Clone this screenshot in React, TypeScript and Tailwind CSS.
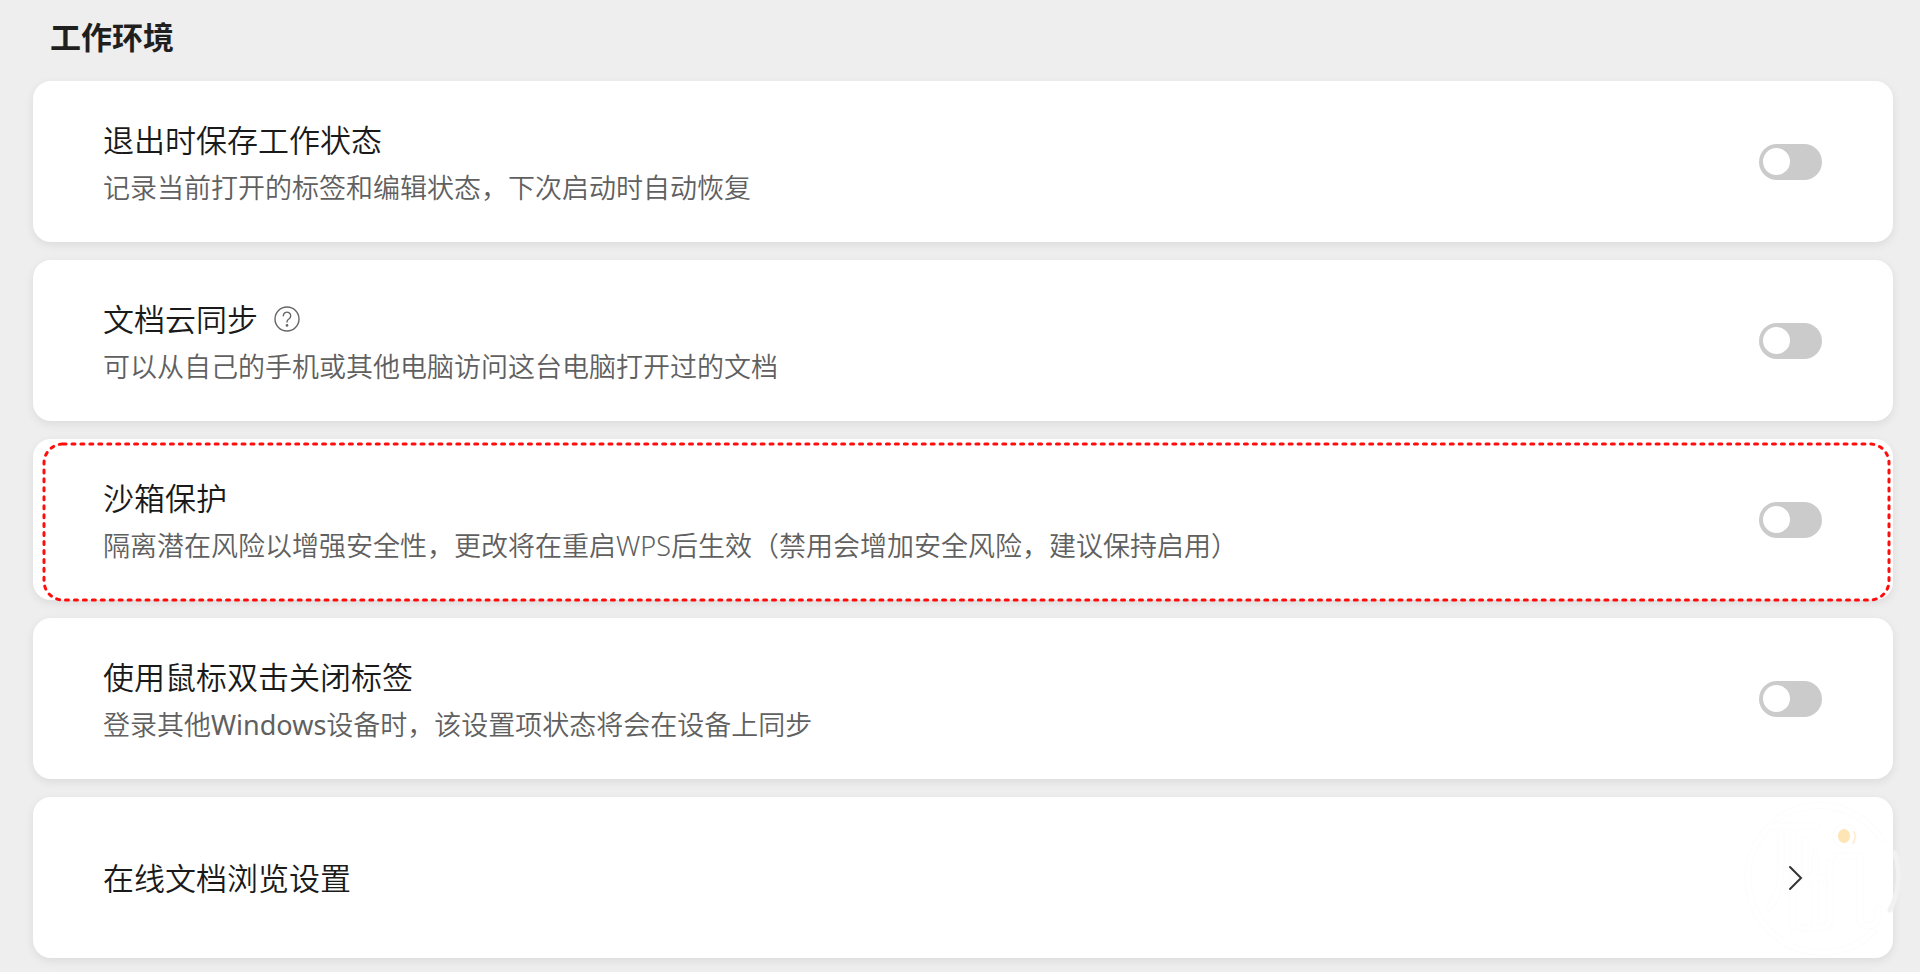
import React, { useId, useState } from 'react';

interface SettingItem {
  title: string;
  description: React.ReactNode;
  hasHelp?: boolean;
  highlighted?: boolean;
}

const settings: SettingItem[] = [
  {
    title: '退出时保存工作状态',
    description: '记录当前打开的标签和编辑状态，下次启动时自动恢复',
  },
  {
    title: '文档云同步',
    description: '可以从自己的手机或其他电脑访问这台电脑打开过的文档',
    hasHelp: true,
  },
  {
    title: '沙箱保护',
    description: '隔离潜在风险以增强安全性，更改将在重启WPS后生效（禁用会增加安全风险，建议保持启用）',
    highlighted: true,
  },
  {
    title: '使用鼠标双击关闭标签',
    description: (
      <>
        登录其他<span className="font-normal">Windows</span>设备时，该设置项状态将会在设备上同步
      </>
    ),
  },
];

const cardClass =
  'relative flex w-full min-h-[161px] items-center justify-between rounded-[18px] bg-white pl-[70px] pr-[71px] text-left shadow-[0_3px_10px_rgba(0,0,0,0.08)]';

const HelpIcon: React.FC = () => (
  <svg width="26" height="26" viewBox="0 0 26 26" fill="none" stroke="#666666" strokeWidth="1.4" strokeLinecap="round">
    <circle cx="13" cy="13" r="12" />
    <path d="M9.3 9.8a3.7 3.7 0 1 1 5.6 3.2c-1.3.8-1.9 1.5-1.9 2.9" />
    <circle cx="13" cy="19.4" r="1.3" fill="#666666" stroke="none" />
  </svg>
);

const DashedOutline: React.FC = () => (
  <svg className="pointer-events-none absolute left-[11px] top-[5px] h-[calc(100%-5px)] w-[calc(100%-15px)] overflow-visible">
    <rect width="100%" height="100%" rx="19" fill="none" stroke="#ff0d0d" strokeWidth="3" strokeDasharray="3 5.95" strokeLinecap="round" />
  </svg>
);

const Watermark: React.FC = () => (
  <svg
    className="pointer-events-none absolute right-[-8px] top-[1px] overflow-visible"
    width="156"
    height="156"
    viewBox="0 0 156 156"
    fill="none"
    strokeLinecap="round"
    strokeLinejoin="round"
  >
    {/* wide pale stroke under a white one leaves a hairline outline */}
    <g stroke="#fcfcfc" strokeWidth="7">
      <path d="M32 21A74 74 0 0 1 137 42M128 134A74 74 0 0 1 21 32" />
      <path d="M24 28h48M36 36v34q0 24-11 39M48 28v102M60 42v38h18M70 57v73H58M85 64v54q0 12-11 12M92 58h23v60q0 10 8 10q10 0 10-10v-8" />
      <circle cx="100" cy="38" r="9" />
    </g>
    <g stroke="#ffffff" strokeWidth="5">
      <path d="M32 21A74 74 0 0 1 137 42M128 134A74 74 0 0 1 21 32" />
      <path d="M24 28h48M36 36v34q0 24-11 39M48 28v102M60 42v38h18M70 57v73H58M85 64v54q0 12-11 12M92 58h23v60q0 10 8 10q10 0 10-10v-8" />
      <circle cx="100" cy="38" r="9" />
    </g>
    <path d="M150 55A74 74 0 0 1 145 112" stroke="#f1f1f1" strokeWidth="5" />
    <path d="M109 34q3 5-1 11" stroke="#feefd0" strokeWidth="2" />
    <ellipse cx="99" cy="38" rx="6" ry="7" fill="#fee5b3" />
  </svg>
);

const Switch: React.FC<{ id: string; describedBy: string }> = ({ id, describedBy }) => {
  const [checked, setChecked] = useState(false);

  return (
    <span className="relative flex shrink-0 items-center">
      <input
        id={id}
        type="checkbox"
        role="switch"
        aria-describedby={describedBy}
        checked={checked}
        onChange={(e) => setChecked(e.target.checked)}
        className="peer h-9 w-[63px] cursor-pointer appearance-none rounded-full bg-[#cbcbcb] transition-colors checked:bg-blue-500"
      />
      <span className="pointer-events-none absolute left-1 size-[27px] rounded-full bg-white transition-transform peer-checked:translate-x-7" />
    </span>
  );
};

const SettingCard: React.FC<{ item: SettingItem }> = ({ item }) => {
  const id = useId();

  return (
    <li className={cardClass}>
      <div className="flex flex-col gap-0.5 pt-0.5">
        <div className="flex items-center gap-4">
          <label htmlFor={id} className="text-[31px] leading-12 text-[#1a1a1a]">
            {item.title}
          </label>
          {item.hasHelp && (
            <button type="button" aria-label="帮助">
              <HelpIcon />
            </button>
          )}
        </div>
        <p id={`${id}-desc`} className="text-[27px] leading-11 text-[#606060]">
          {item.description}
        </p>
      </div>
      <Switch id={id} describedBy={`${id}-desc`} />
      {item.highlighted && <DashedOutline />}
    </li>
  );
};

const App: React.FC = () => {
  return (
    <main className="min-h-screen bg-[#eeeeee] pb-3.5 pl-[33px] pr-[27px] pt-4 font-['Noto_Sans','Noto_Sans_CJK_SC',sans-serif] font-[350]">
      <h1 className="mb-[23px] pl-[17px] text-[31px] font-bold leading-[42px] text-[#1f1f1f]">工作环境</h1>
      <ul className="flex flex-col gap-[18px]">
        {settings.map((item) => (
          <SettingCard key={item.title} item={item} />
        ))}
        <li>
          <button type="button" className={cardClass}>
            <span className="text-[31px] leading-12 text-[#1a1a1a]">在线文档浏览设置</span>
            <Watermark />
            <svg className="relative" width="40" height="26" viewBox="0 0 40 26" fill="none" stroke="#333333" strokeWidth="2" strokeLinecap="round">
              <path d="M8 2l11 11L8 24" />
            </svg>
          </button>
        </li>
      </ul>
    </main>
  );
};

export default App;
